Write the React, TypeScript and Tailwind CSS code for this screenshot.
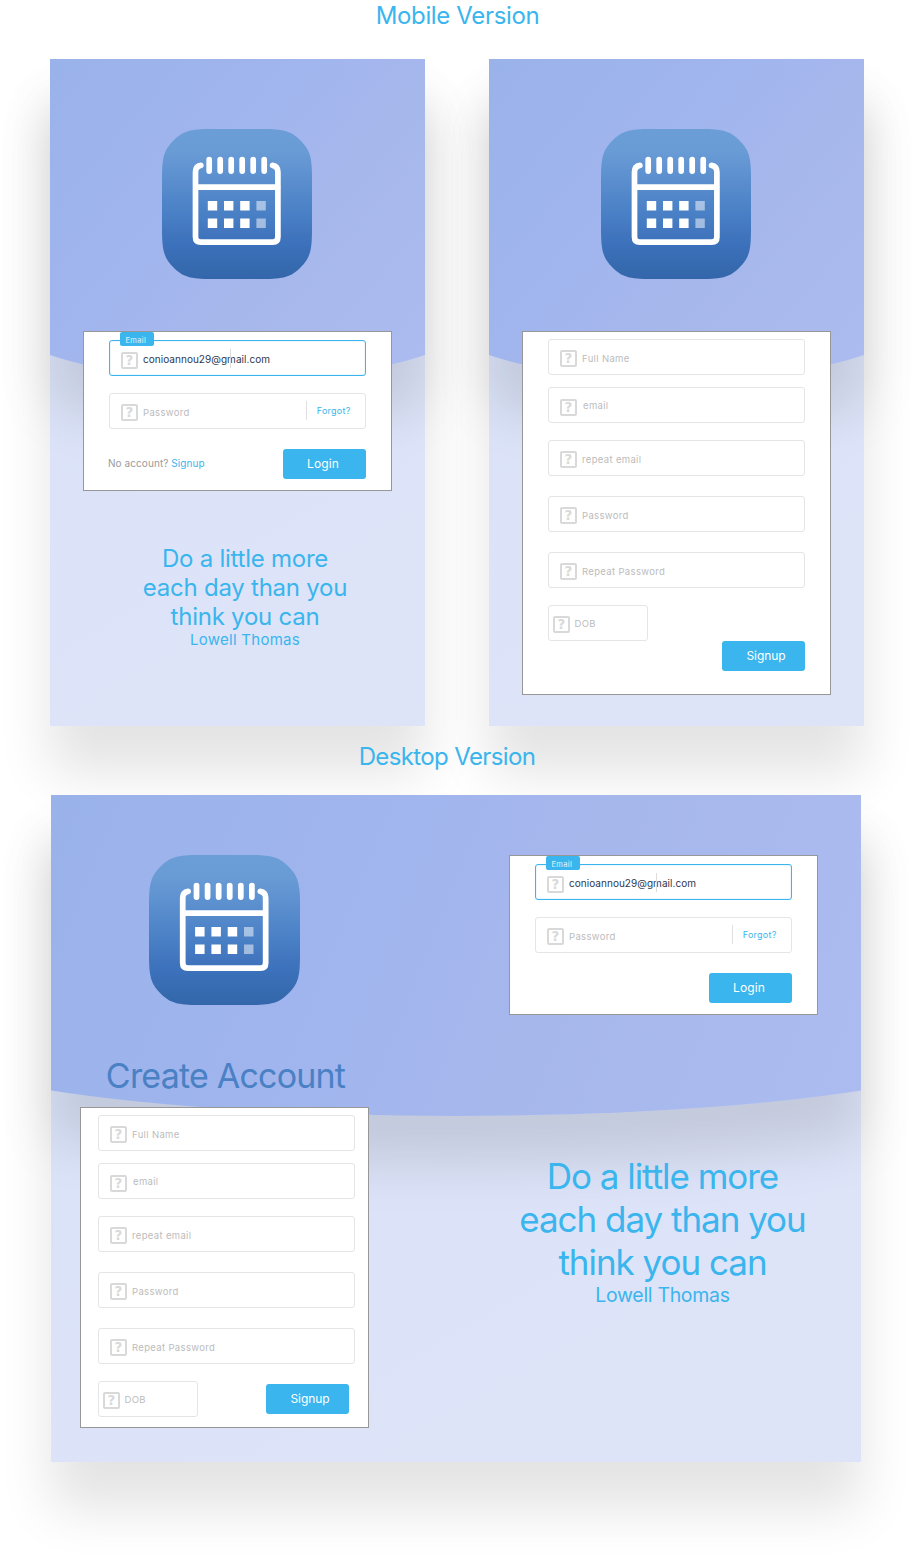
import { useId } from "react";

function BoardBackdrop({ width, top, curve, bottom }: { width: number; top: number; curve: number; bottom: number }) {
  const id = useId();
  return (
    <svg
      className="absolute left-0 top-0 overflow-visible drop-shadow-[0_47px_25px_rgba(0,0,0,0.11)]"
      width={width}
      height={bottom}
      viewBox={`0 0 ${width} ${bottom}`}
    >
      <defs>
        <linearGradient id={id} gradientUnits="userSpaceOnUse" x1="0" y1="0" x2={width} y2={bottom}>
          <stop offset="0" stopColor="#9ab2ea" />
          <stop offset="0.4" stopColor="#a1b5ee" />
          <stop offset="0.6" stopColor="#a6b7ec" />
          <stop offset="1" stopColor="#acbcf0" />
        </linearGradient>
      </defs>
      <path d={`M0 0H${width}V${top}A${curve} 75 0 0 1 0 ${top}Z`} fill={`url(#${id})`} />
    </svg>
  );
}

function AppIcon({ width = 150 }: { width?: number }) {
  const id = useId();
  return (
    <svg width={width} height={150} viewBox="0 0 150 150" preserveAspectRatio="none" className="block shrink-0">
      <defs>
        <linearGradient id={id} x1="0" y1="0" x2="0" y2="1">
          <stop offset="0" stopColor="#6b9dd7" />
          <stop offset="0.15" stopColor="#699bd5" />
          <stop offset="0.5" stopColor="#4e84c8" />
          <stop offset="0.77" stopColor="#3c71bb" />
          <stop offset="1" stopColor="#3366a9" />
        </linearGradient>
      </defs>
      <path
        d="M0 50C0 28 2 21 11.5 11.5C21 2 28 0 50 0H100C122 0 129 2 138.5 11.5C148 21 150 28 150 50V100C150 122 148 129 138.5 138.5C129 148 122 150 100 150H50C28 150 21 148 11.5 138.5C2 129 0 122 0 100Z"
        fill={`url(#${id})`}
      />
      <g fill="none" stroke="#fff" strokeWidth="5.7" strokeLinecap="round">
        <path d="M38.9 36.3Q33.5 37 33.5 43V108Q33.5 113.2 38.7 113.2H110.7Q115.9 113.2 115.9 108V43Q115.9 37 110.5 36.3" />
        <path d="M34 58.2H115.5" />
        <path d="M47.2 30.6V42.1M58.2 30.6V42.1M69.2 30.6V42.1M80.2 30.6V42.1M91.2 30.6V42.1M102.2 30.6V42.1" />
      </g>
      <g fill="#fff">
        <path d="M45.8 72h9.4v9.4h-9.4zM62 72h9.4v9.4H62zM78.2 72h9.4v9.4h-9.4z" />
        <path d="M45.8 89.6h9.4V99h-9.4zM62 89.6h9.4V99H62zM78.2 89.6h9.4V99h-9.4z" />
        <path opacity="0.5" d="M94.4 72h9.4v9.4h-9.4zM94.4 89.6h9.4V99h-9.4z" />
      </g>
    </svg>
  );
}

function HelpBox({ className }: { className: string }) {
  return (
    <span
      className={`flex size-[17px] shrink-0 items-start justify-center rounded-[2px] border-2 border-[#d9d9d9] font-['DejaVu_Sans',sans-serif] text-[13.5px] font-bold leading-[12px] text-[#d9d9d9] ${className}`}
    >
      ?
    </span>
  );
}

function Field({
  label,
  className = "",
  icon = "ml-[11px] mt-[10px]",
  text = "ml-[5px] mt-[13px]",
}: {
  label: string;
  className?: string;
  icon?: string;
  text?: string;
}) {
  return (
    <div className={`flex h-9 items-start rounded-[3px] border border-[#e5e5e7] ${className}`}>
      <HelpBox className={icon} />
      <span className={`whitespace-nowrap text-[9.5px] leading-3 tracking-[0.34px] text-[#bcbcbc] ${text}`}>{label}</span>
    </div>
  );
}

function LoginCard({ withSignup = false }: { withSignup?: boolean }) {
  return (
    <div className="flex h-[160px] w-[309px] flex-col border border-[#979797] bg-white pl-[25px] pr-[25px] pt-2">
      <div className="relative flex h-9 items-start rounded-[3px] border border-[#3ab5ed] shadow-[inset_0_0_0_0.5px_#3ab5ed33]">
        <span className="absolute -top-[9px] left-[10px] h-[14px] w-[34px] rounded-[2px] bg-[#3ab5ed] pl-[5.5px] pt-[4px] text-[7.5px] leading-[10px] tracking-[0.35px] text-white/85">
          Email
        </span>
        <HelpBox className="ml-[11px] mt-[11px]" />
        <span className="ml-[5px] mt-[12px] text-[10px] leading-3 tracking-[0.04px] text-[#2e3850]">
          conioannou29@gmail.com
        </span>
        <span className="absolute left-[120px] top-[8px] h-[19px] w-px bg-[#dcdcdc]" />
      </div>
      <div className="mt-[17px] flex h-9 items-start rounded-[3px] border border-[#e5e5e7]">
        <HelpBox className="ml-[11px] mt-[10px]" />
        <span className="ml-[5px] mt-[13px] text-[9.5px] leading-3 tracking-[0.34px] text-[#bcbcbc]">Password</span>
        <span className="ml-auto mt-[7px] h-[19px] w-px bg-[#dfdfe1]" />
        <span className="ml-[10px] mr-[14.5px] mt-[11px] text-[9px] leading-3 tracking-[0.24px] text-[#3ab5ed]">Forgot?</span>
      </div>
      <div className="mt-5 flex items-start">
        {withSignup && (
          <p className="-ml-[1px] mt-2 text-[10px] leading-3 tracking-[0.08px] text-[#9b9b9b]">
            No account? <a className="text-[#3ab5ed]">Signup</a>
          </p>
        )}
        <button className="ml-auto h-[30px] w-[83px] rounded-[3px] bg-[#3ab5ed] pb-2 pl-6 pt-[7px] text-left text-[12px] leading-[15px] tracking-[0.12px] text-white">
          Login
        </button>
      </div>
    </div>
  );
}

function SignupCard({ desktop = false }: { desktop?: boolean }) {
  return (
    <div
      className={`flex flex-col border border-[#979797] bg-white pt-[7px] ${
        desktop ? "h-[321px] w-[289px] pl-[17px] pr-[13px]" : "h-[364px] w-[309px] pl-[25px] pr-[25px]"
      }`}
    >
      <Field label="Full Name" />
      <Field label="email" className="mt-3" icon="ml-[11px] mt-[11px]" text="ml-[6px] mt-3" />
      <Field label="repeat email" className="mt-[17px]" />
      <Field label="Password" className="mt-5" />
      <Field label="Repeat Password" className="mt-5" />
      <div className="mt-[17px] flex items-start justify-between">
        <Field label="DOB" className="w-[100px]" icon="ml-1 mt-[10px]" text="ml-[4.5px] mt-3" />
        <button
          className={`h-[30px] w-[83px] rounded-[3px] bg-[#3ab5ed] pb-2 pl-[24.5px] pt-[7px] text-left text-[12px] leading-[15px] tracking-[-0.1px] text-white ${
            desktop ? "mr-[6px] mt-[3px]" : "mt-9"
          }`}
        >
          Signup
        </button>
      </div>
    </div>
  );
}

const board =
  "relative bg-linear-150 from-[#d7e2f8] via-[#dce3f8] to-[#dee4f8] shadow-[0_47px_50px_rgba(0,0,0,0.11)]";

export default function App() {
  return (
    <main className="h-[1562px] w-[914px] overflow-hidden bg-white font-['Inter','Liberation_Sans',sans-serif]">
      <h2 className="pl-px pt-px text-center text-[24px] leading-[29px] tracking-[-0.36px] text-[#3ab5ed]">Mobile Version</h2>

      <div className="mt-[29px] flex gap-16 pl-[50px]">
        <section className={`${board} h-[667px] w-[375px]`}>
          <BoardBackdrop width={375} top={296} curve={250} bottom={322} />
          <div className="relative flex flex-col items-center pt-[70px]">
            <div className="pr-px">
              <AppIcon />
            </div>
            <div className="mt-[52px]">
              <LoginCard withSignup />
            </div>
            <div className="ml-[15px] mt-[53px] text-center text-[#3ab5ed]">
              <p className="text-[24px] leading-[29px] tracking-[-0.24px]">
                Do a little more
                <br />
                each day than you
                <br />
                think you can
              </p>
              <p className="text-[15px] leading-[17px] tracking-[0.26px]">Lowell Thomas</p>
            </div>
          </div>
        </section>

        <section className={`${board} h-[667px] w-[375px]`}>
          <BoardBackdrop width={375} top={296} curve={250} bottom={322} />
          <div className="relative flex flex-col items-center pt-[70px]">
            <div className="pr-px">
              <AppIcon />
            </div>
            <div className="mt-[52px]">
              <SignupCard />
            </div>
          </div>
        </section>
      </div>

      <h2 className="relative mt-4 pr-[20px] text-center text-[24px] leading-[29px] tracking-[-0.62px] text-[#3ab5ed]">
        Desktop Version
      </h2>

      <section className={`${board} ml-[51px] mt-6 h-[667px] w-[810px]`}>
        <BoardBackdrop width={810} top={295.5} curve={540} bottom={321} />
        <div className="relative flex items-start pl-[29px] pt-[60px]">
          <div className="flex w-[289px] flex-col items-center">
            <AppIcon width={151} />
            <h1 className="ml-[2px] mt-[49px] whitespace-nowrap text-[34px] leading-[43px] tracking-[-0.8px] text-[#4a80c4]">
              Create Account
            </h1>
            <div className="mt-[10px]">
              <SignupCard desktop />
            </div>
          </div>
          <div className="ml-[140px] flex w-[309px] flex-col items-center">
            <LoginCard />
            <div className="mr-[2px] mt-[140px] whitespace-nowrap text-center text-[#3ab5ed]">
              <p className="text-[35px] leading-[43px] tracking-[-1.03px]">
                Do a little more
                <br />
                each day than you
                <br />
                think you can
              </p>
              <p className="text-[19.5px] leading-[22px] tracking-[-0.32px]">Lowell Thomas</p>
            </div>
          </div>
        </div>
      </section>
    </main>
  );
}
